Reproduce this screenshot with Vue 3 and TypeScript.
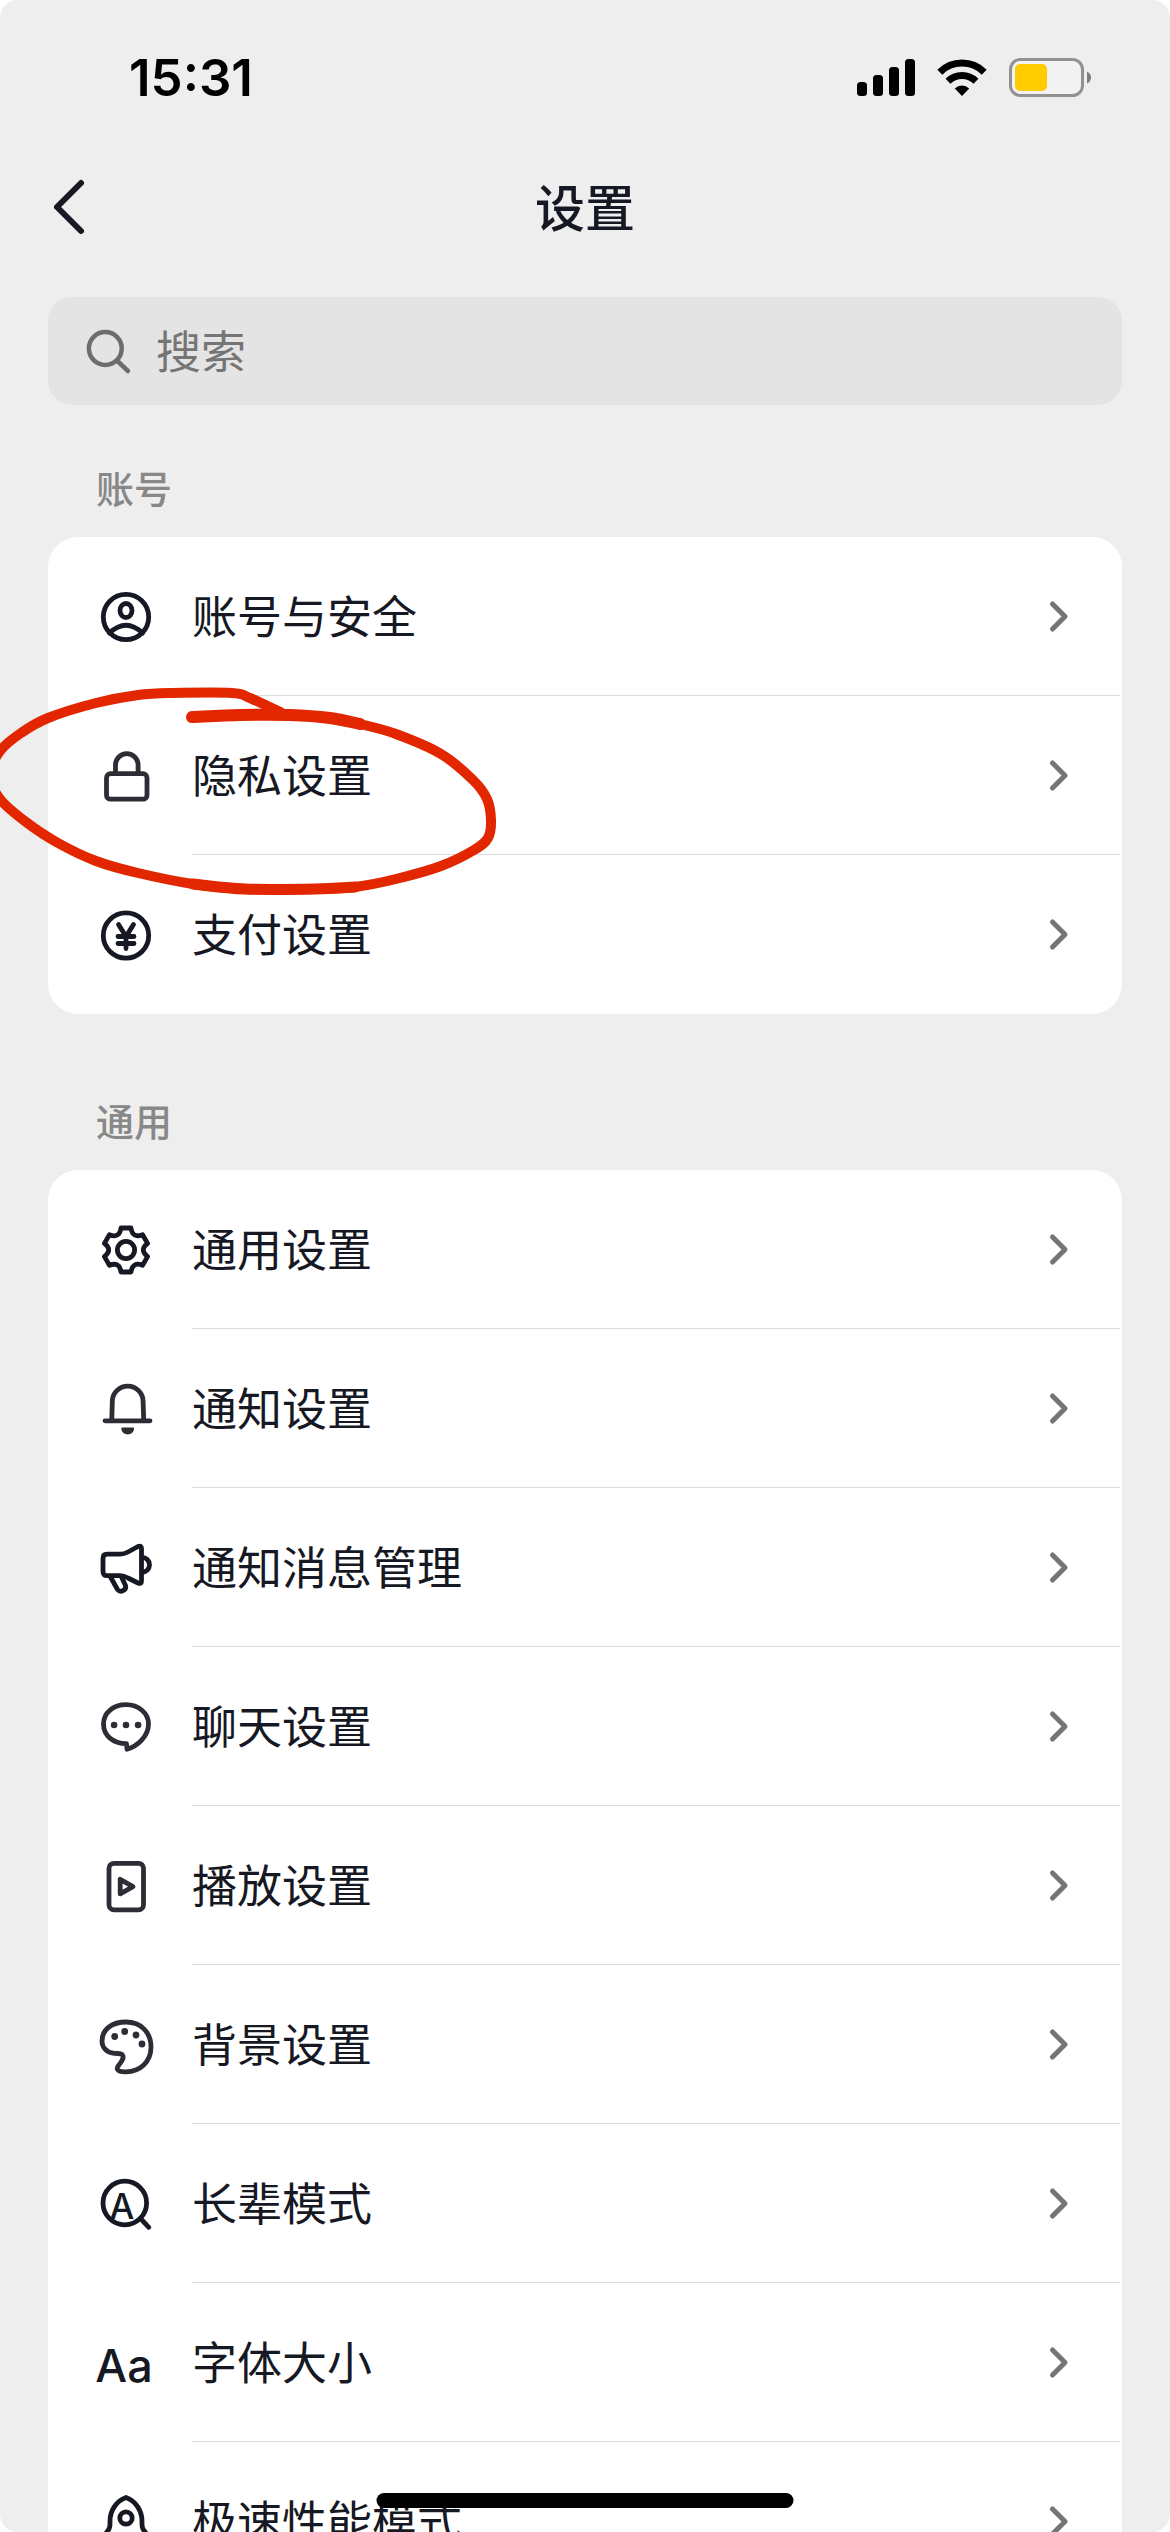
<script setup lang="ts">
import { ref } from 'vue'

type IconName =
  | 'account' | 'lock' | 'yen' | 'gear' | 'bell' | 'megaphone'
  | 'chat' | 'play' | 'palette' | 'elder' | 'font' | 'rocket'

interface Item {
  icon: IconName
  label: string
  circled?: boolean
}

interface Group {
  title: string
  items: Item[]
}

type Point = [number, number]

const keyword = ref('')

const groups: Group[] = [
  {
    title: '账号',
    items: [
      { icon: 'account', label: '账号与安全' },
      { icon: 'lock', label: '隐私设置', circled: true },
      { icon: 'yen', label: '支付设置' },
    ],
  },
  {
    title: '通用',
    items: [
      { icon: 'gear', label: '通用设置' },
      { icon: 'bell', label: '通知设置' },
      { icon: 'megaphone', label: '通知消息管理' },
      { icon: 'chat', label: '聊天设置' },
      { icon: 'play', label: '播放设置' },
      { icon: 'palette', label: '背景设置' },
      { icon: 'elder', label: '长辈模式' },
      { icon: 'font', label: '字体大小' },
      { icon: 'rocket', label: '极速性能模式' },
    ],
  },
]

// Six-toothed gear outline: one tooth, turned by 60 degrees each time.
function gearPath(): string {
  const turn = (x: number, y: number, k: number): string => {
    const a = (k * Math.PI) / 3
    const px = 30 + x * Math.cos(a) - y * Math.sin(a)
    const py = 30 + x * Math.sin(a) + y * Math.cos(a)
    return `${px.toFixed(2)} ${py.toFixed(2)}`
  }
  let d = `M${turn(-5, -22, 0)}`
  for (let k = 0; k < 6; k++) {
    d += `L${turn(5, -22, k)}`
    d += `Q${turn(5.8, -16.6, k)} ${turn(8.6, -15, k)}`
    d += `Q${turn(-5.8, -16.6, k + 1)} ${turn(-5, -22, k + 1)}`
  }
  return d + 'Z'
}

// Smooth curve through a list of points.
function smooth(points: Point[]): string {
  let d = `M${points[0].join(' ')}`
  for (let i = 0; i < points.length - 1; i++) {
    const p0 = points[Math.max(i - 1, 0)]
    const p1 = points[i]
    const p2 = points[i + 1]
    const p3 = points[Math.min(i + 2, points.length - 1)]
    const c1 = [p1[0] + (p2[0] - p0[0]) / 6, p1[1] + (p2[1] - p0[1]) / 6]
    const c2 = [p2[0] - (p3[0] - p1[0]) / 6, p2[1] - (p3[1] - p1[1]) / 6]
    d += `C${c1.map((n) => n.toFixed(1)).join(' ')} ${c2.map((n) => n.toFixed(1)).join(' ')} ${p2.join(' ')}`
  }
  return d
}

const gear = gearPath()

const ringStart: Point[] = [[192, 717], [240, 715], [290, 715], [330, 718], [360, 724]]
const ring: Point[] = [
  [290, 715], [330, 718], [360, 724], [396, 734], [441, 754], [473, 780], [487, 799],
  [491, 820], [488, 838], [474, 850], [441, 866], [396, 879], [355, 887], [315, 889],
  [245, 889], [193, 884], [138, 873], [96, 861], [58, 843], [26, 822], [0, 799],
  [-10, 775], [0, 751], [21, 733], [48, 718], [96, 703], [138, 695], [172, 693],
  [232, 693], [250, 698], [282, 713],
]
const ringBottom: Point[] = ring.slice(12, 16)
</script>

<template>
  <div class="screen">
    <div class="status">
      <span class="time">15:31</span>
      <div class="signals">
        <svg width="58" height="38" viewBox="0 0 58 38" aria-hidden="true">
          <rect x="0" y="23" width="10" height="14" rx="3.5" />
          <rect x="16" y="16" width="10" height="21" rx="3.5" />
          <rect x="32" y="8" width="10" height="29" rx="3.5" />
          <rect x="48" y="0" width="10" height="37" rx="3.5" />
        </svg>
        <svg class="wifi" width="50" height="38" viewBox="0 0 50 38" aria-hidden="true">
          <path d="M2.8 13.2a31.5 31.5 0 0 1 44.4 0M11 22.2a20 20 0 0 1 28 0" fill="none" stroke="#000" stroke-width="7" />
          <path d="M25 37l-7.2-7.6a10.4 10.4 0 0 1 14.4 0z" />
        </svg>
        <svg width="83" height="40" viewBox="0 0 83 40" aria-hidden="true">
          <rect x="1.5" y="1.5" width="72" height="36" rx="10" fill="#f2f2f2" stroke="#919191" stroke-width="3" />
          <rect x="6" y="6" width="32" height="27" rx="5" fill="#fc0" />
          <path d="M78 13.5q4 2 4 6t-4 6z" fill="#7c7c7c" />
        </svg>
      </div>
    </div>

    <header class="nav">
      <button class="back" type="button" aria-label="返回">
        <svg width="36" height="60" viewBox="0 0 36 60" aria-hidden="true">
          <path d="M30 6L6 30L30 54" fill="none" stroke="#161823" stroke-width="6" stroke-linecap="round" stroke-linejoin="round" />
        </svg>
      </button>
      <h1>设置</h1>
    </header>

    <label class="search">
      <svg width="48" height="48" viewBox="0 0 48 48" aria-hidden="true">
        <g fill="none" stroke="#6d6d6d" stroke-width="4.5" stroke-linecap="round">
          <circle cx="21.3" cy="21.5" r="16.4" />
          <path d="M33.4 34L44 44" />
        </g>
      </svg>
      <input v-model="keyword" type="text" placeholder="搜索" aria-label="搜索" />
    </label>

    <main class="list">
      <section v-for="group in groups" :key="group.title" class="group">
        <h2>{{ group.title }}</h2>
        <ul class="card">
          <li v-for="item in group.items" :key="item.label" class="row">
            <a href="#">
              <svg class="icon" viewBox="0 0 60 60" aria-hidden="true">
                <g v-if="item.icon === 'account'">
                  <circle cx="30" cy="30" r="22.7" />
                  <ellipse cx="30" cy="23.5" rx="6" ry="7" />
                  <path d="M13.5 46Q30 30.5 46.5 46" />
                </g>
                <g v-else-if="item.icon === 'lock'" class="soft">
                  <rect x="10.5" y="27.7" width="40.5" height="25.5" rx="4" />
                  <path d="M19.5 27V19a11.3 11.3 0 0 1 22.6 0V27" />
                </g>
                <g v-else-if="item.icon === 'yen'">
                  <circle cx="30" cy="30.5" r="22.7" />
                  <path d="M22.5 19.5L30 31.500L37.500 19.500M30 31.500V43.500M22 31.500H38M22 38.500H38" />
                </g>
                <g v-else-if="item.icon === 'gear'">
                  <path :d="gear" />
                  <circle cx="30" cy="30" r="8.6" />
                </g>
                <g v-else-if="item.icon === 'bell'" class="soft">
                  <path d="M9 41.8H54M15.8 41L16.3 22.5a15.400 15.400 0 0 1 30.800 0L47.700 41" />
                  <path class="solid" d="M25.3 49.5q0-1 1-1h10.800q1 0 1 1a6.400 6 0 0 1-12.800 0z" />
                </g>
                <g v-else-if="item.icon === 'megaphone'">
                  <path d="M11 16.200H24Q28 16.200 32 14L42 8.500q3.500-1.500 3.500 2V43q0 3.500-3.500 2L32 40Q28 37.700 24 37.700H11q-4 0-4-4V20.200q0-4 4-4z" />
                  <path d="M46 19.300a7.500 7.500 0 0 1 0 15M14.500 39L21.500 51.500a4.600 4.600 0 0 0 8-4L25.500 39" />
                </g>
                <g v-else-if="item.icon === 'chat'" class="soft">
                  <path d="M30.500 46.700C17 46.500 7.500 38.500 7.500 27C7.500 15.500 17.500 7.700 30 7.700S52.500 16 52.500 27C52.500 39 42 49 31 52.300z" />
                  <path class="solid" d="M14.800 28a3.300 3.300 0 1 0 6.600 0a3.300 3.300 0 1 0-6.600 0M26.700 28a3.300 3.300 0 1 0 6.600 0a3.300 3.300 0 1 0-6.600 0M38.800 28a3.300 3.300 0 1 0 6.600 0a3.300 3.300 0 1 0-6.600 0" />
                </g>
                <g v-else-if="item.icon === 'play'" class="soft">
                  <rect x="13" y="7.300" width="34.500" height="46.500" rx="5" />
                  <path d="M24.200 23.300V37.900L37 30.600z" />
                </g>
                <g v-else-if="item.icon === 'palette'" class="soft">
                  <path d="M30 7C45 7 55 17.500 55 32C55 47 44 56.500 30 56.800C22 57 19.500 54.500 22.500 50.500C25.500 46.500 28.500 43 26.500 40C25 37.600 21 39 17 38.200C9.500 36.700 6 31.500 6 26C6 14 16.500 7 30 7z" />
                  <path class="solid" d="M15.300 21.500a3.400 3.400 0 1 0 6.800 0a3.400 3.400 0 1 0-6.800 0M25.300 16.500a3.400 3.400 0 1 0 6.800 0a3.400 3.400 0 1 0-6.800 0M36.600 20a3.400 3.400 0 1 0 6.800 0a3.400 3.400 0 1 0-6.800 0M42.600 29a3.400 3.400 0 1 0 6.800 0a3.400 3.400 0 1 0-6.800 0" />
                </g>
                <g v-else-if="item.icon === 'elder'">
                  <circle cx="28.800" cy="29" r="21.800" />
                  <path d="M44.500 44.500L52.800 53.300" />
                  <text x="26" y="45" font-size="35">A</text>
                </g>
                <text v-else-if="item.icon === 'font'" x="28" y="49" font-size="45">Aa</text>
                <g v-else>
                  <path d="M30 5.500C20 9 14 19 14 29C14 34 14.500 36 12 38.500L8 44V54H52V44L48 38.500C45.500 36 46 34 46 29C46 19 40 9 30 5.500z" />
                  <circle cx="30" cy="26" r="6.200" />
                </g>
              </svg>
              <span class="body">
                <span class="label">{{ item.label }}</span>
                <svg class="chevron" width="24" height="36" viewBox="0 0 24 36" aria-hidden="true">
                  <path d="M4.500 6L17 18.500L4.500 31" fill="none" stroke="#757575" stroke-width="5" stroke-linecap="round" stroke-linejoin="round" />
                </svg>
              </span>
            </a>
            <!-- Hand-drawn ring round the row -->
            <svg v-if="item.circled" class="ring" width="510" height="220" viewBox="0 680 510 220" aria-hidden="true">
              <g fill="none" stroke="#e22700" stroke-linecap="round" stroke-linejoin="round">
                <path stroke-width="12" :d="smooth(ringStart)" />
                <path stroke-width="10" :d="smooth(ring)" />
                <path stroke-width="11" :d="smooth(ringBottom)" />
              </g>
            </svg>
          </li>
        </ul>
      </section>
    </main>

    <div class="home-indicator"></div>
  </div>
</template>

<style>
body {
  margin: 0;
  background: #fff;
}
</style>

<style scoped>
.screen {
  position: relative;
  display: flex;
  flex-direction: column;
  height: 100vh;
  overflow: hidden;
  border-radius: 18px;
  background: #eee;
  color: #161823;
  font-family: 'Noto Sans CJK SC', sans-serif;
}

.status {
  display: flex;
  flex: none;
  align-items: center;
  justify-content: space-between;
  height: 156px;
  padding: 0 78px 0 129px;
}

.time {
  color: #000;
  font: 600 51px/60px Inter, sans-serif;
}

.signals {
  display: flex;
  align-items: center;
  gap: 22px;
}

.nav {
  display: flex;
  flex: none;
  align-items: center;
  justify-content: space-between;
  height: 102px;
  padding: 0 51px;
}

.nav::after {
  width: 36px;
  content: '';
}

.back {
  display: flex;
  padding: 0;
  border: 0;
  background: none;
}

h1 {
  margin: 0;
  padding-bottom: 4px;
  font-size: 50px;
  font-weight: 500;
  line-height: 72px;
}

.search {
  display: flex;
  flex: none;
  align-items: center;
  gap: 24px;
  height: 108px;
  margin: 39px 48px 0;
  padding: 0 36px;
  box-sizing: border-box;
  border-radius: 24px;
  background: #e4e4e4;
}

.search input {
  flex: 1;
  min-width: 0;
  padding: 0 0 2px;
  border: 0;
  outline: 0;
  background: none;
  color: #161823;
  font: inherit;
  font-size: 45px;
  line-height: 66px;
}

.search input::placeholder {
  color: #757575;
  opacity: 1;
}

.list {
  flex: 1;
  min-height: 0;
  padding: 60px 48px 0;
  overflow: hidden auto;
  scrollbar-width: none;
}

.group + .group {
  margin-top: 84px;
}

h2 {
  margin: 0;
  padding: 0 48px 28px;
  color: #888;
  font-size: 38px;
  font-weight: 500;
  line-height: 44px;
}

.card {
  margin: 0;
  padding: 0;
  border-radius: 30px;
  background: #fff;
  list-style: none;
}

.row {
  position: relative;
}

.row a {
  display: flex;
  align-items: center;
  gap: 36px;
  padding: 0 2px 0 48px;
  color: inherit;
  text-decoration: none;
}

.icon {
  flex: none;
  width: 60px;
  height: 60px;
  overflow: visible;
  color: #161823;
}

.icon circle,
.icon ellipse,
.icon rect,
.icon path {
  fill: none;
  stroke: currentColor;
  stroke-width: 4.8;
  stroke-linecap: round;
  stroke-linejoin: round;
}

.icon .soft {
  color: #2d2d35;
}

.icon .solid {
  fill: currentColor;
  stroke: none;
}

.icon text {
  fill: currentColor;
  font-family: Inter, sans-serif;
  font-weight: 500;
  text-anchor: middle;
}

.body {
  display: flex;
  flex: 1;
  align-items: center;
  justify-content: space-between;
  height: 159px;
  padding-right: 48px;
  box-sizing: border-box;
  border-bottom: 1px solid #dcdcdd;
}

.row:last-child .body {
  border-bottom-color: transparent;
}

.label {
  padding-bottom: 2px;
  font-size: 45px;
  line-height: 66px;
}

.ring {
  position: absolute;
  top: -16px;
  left: -48px;
  z-index: 1;
  pointer-events: none;
}

.home-indicator {
  position: absolute;
  bottom: 24px;
  left: 50%;
  width: 417px;
  height: 15px;
  border-radius: 8px;
  background: #000;
  transform: translateX(-50%);
}
</style>
